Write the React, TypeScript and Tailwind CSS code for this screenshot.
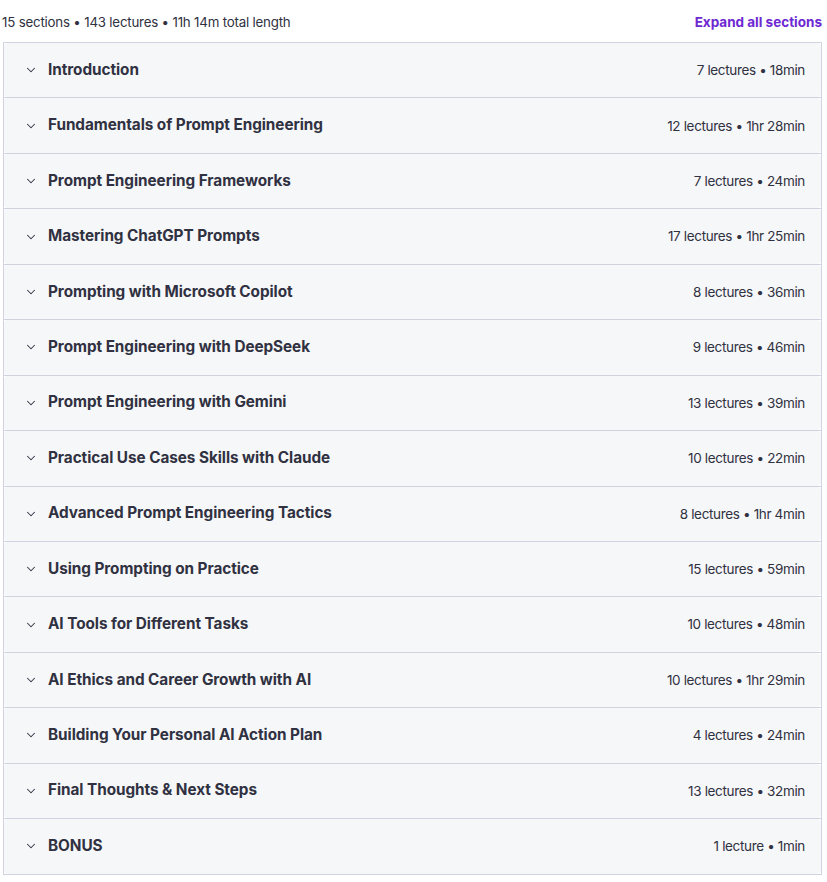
import { ChevronDown } from 'lucide-react'

const sections = [
  { title: 'Introduction', meta: '7 lectures • 18min' },
  { title: 'Fundamentals of Prompt Engineering', meta: '12 lectures • 1hr 28min' },
  { title: 'Prompt Engineering Frameworks', meta: '7 lectures • 24min' },
  { title: 'Mastering ChatGPT Prompts', meta: '17 lectures • 1hr 25min' },
  { title: 'Prompting with Microsoft Copilot', meta: '8 lectures • 36min' },
  { title: 'Prompt Engineering with DeepSeek', meta: '9 lectures • 46min' },
  { title: 'Prompt Engineering with Gemini', meta: '13 lectures • 39min' },
  { title: 'Practical Use Cases Skills with Claude', meta: '10 lectures • 22min' },
  { title: 'Advanced Prompt Engineering Tactics', meta: '8 lectures • 1hr 4min' },
  { title: 'Using Prompting on Practice', meta: '15 lectures • 59min' },
  { title: 'AI Tools for Different Tasks', meta: '10 lectures • 48min' },
  { title: 'AI Ethics and Career Growth with AI', meta: '10 lectures • 1hr 29min' },
  { title: 'Building Your Personal AI Action Plan', meta: '4 lectures • 24min' },
  { title: 'Final Thoughts & Next Steps', meta: '13 lectures • 32min' },
  { title: 'BONUS', meta: '1 lecture • 1min' },
]

export default function App() {
  return (
    <div className="min-h-screen bg-white font-['Inter',sans-serif] text-[#2d2f31]">
      <div className="pl-[3px] pr-[5px] pt-[12px]">
        {/* Summary line */}
        <div className="flex items-center justify-between h-[20px] mb-[10px]">
          <span className="text-[13.3px] tracking-[-0.2px] text-[#303141] -ml-[1px] mt-[2px]">
            15 sections • 143 lectures • 11h 14m total length
          </span>
          <button className="text-[13.5px] font-bold text-[#6d28d2] tracking-[0px]">
            Expand all sections
          </button>
        </div>

        {/* Curriculum accordion */}
        <div className="border border-[#d1d2e0]">
          {sections.map((s, i) => (
            <div
              key={s.title}
              className={i < sections.length - 1 ? 'border-b border-[#d1d2e0]' : ''}
            >
              <div className="flex items-center justify-between h-[54.45px] bg-[#f6f7f9] rounded-[4px] pl-[20px] pr-[16px]">
                <div className="flex items-center gap-[10px]">
                  <ChevronDown className="w-[14px] h-[14px] text-[#303141]" strokeWidth={1.75} />
                  <span className="text-[15.3px] font-bold text-[#303141] tracking-[-0.05px]">{s.title}</span>
                </div>
                <span className="text-[13.5px] text-[#303141] tracking-[-0.35px]">{s.meta}</span>
              </div>
            </div>
          ))}
        </div>
      </div>
    </div>
  )
}
